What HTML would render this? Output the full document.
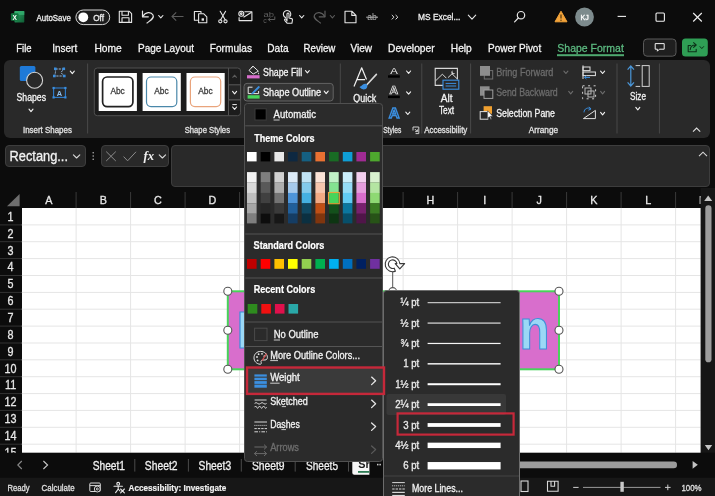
<!DOCTYPE html>
<html><head><meta charset="utf-8"><title>Excel</title>
<style>
*{box-sizing:border-box;margin:0;padding:0}
html,body{width:715px;height:496px;overflow:hidden;background:#0c0c0c}
body{position:relative;font-family:"Liberation Sans",sans-serif;color:#fff}
.a{position:absolute}
svg.L{position:absolute;left:0;top:0;overflow:hidden;will-change:transform}
</style></head><body>
<div class="a" style="left:4px;top:59.5px;width:706px;height:78.5px;background:#292929;border-radius:6px"></div>
<div class="a" style="left:5px;top:144.5px;width:80.5px;height:22.5px;background:#292929;border:1px solid #3d3d3d;border-radius:4px"></div>
<div class="a" style="left:100.5px;top:144.5px;width:68px;height:22.5px;background:#292929;border:1px solid #3d3d3d;border-radius:4px"></div>
<div class="a" style="left:171px;top:144.5px;width:539px;height:42px;background:#292929;border:1px solid #3d3d3d;border-radius:4px"></div>
<div class="a" style="left:21.6px;top:208.0px;width:679.0px;height:244.7px;background:#fff"></div>
<div class="a" style="left:0;top:477.3px;width:715px;height:19px;background:#171717"></div>
<svg class="L" width="715" height="496" viewBox="0 0 715 496" font-family="Liberation Sans, sans-serif" >
<line x1="76.1" y1="208" x2="76.1" y2="452.7" stroke="#e5e5e5" stroke-width="1"/>
<line x1="76.1" y1="192" x2="76.1" y2="208" stroke="#3a3a3a" stroke-width="1"/>
<line x1="130.6" y1="208" x2="130.6" y2="452.7" stroke="#e5e5e5" stroke-width="1"/>
<line x1="130.6" y1="192" x2="130.6" y2="208" stroke="#3a3a3a" stroke-width="1"/>
<line x1="185.1" y1="208" x2="185.1" y2="452.7" stroke="#e5e5e5" stroke-width="1"/>
<line x1="185.1" y1="192" x2="185.1" y2="208" stroke="#3a3a3a" stroke-width="1"/>
<line x1="239.6" y1="208" x2="239.6" y2="452.7" stroke="#e5e5e5" stroke-width="1"/>
<line x1="239.6" y1="192" x2="239.6" y2="208" stroke="#3a3a3a" stroke-width="1"/>
<line x1="294.1" y1="208" x2="294.1" y2="452.7" stroke="#e5e5e5" stroke-width="1"/>
<line x1="294.1" y1="192" x2="294.1" y2="208" stroke="#3a3a3a" stroke-width="1"/>
<line x1="348.6" y1="208" x2="348.6" y2="452.7" stroke="#e5e5e5" stroke-width="1"/>
<line x1="348.6" y1="192" x2="348.6" y2="208" stroke="#3a3a3a" stroke-width="1"/>
<line x1="403.1" y1="208" x2="403.1" y2="452.7" stroke="#e5e5e5" stroke-width="1"/>
<line x1="403.1" y1="192" x2="403.1" y2="208" stroke="#3a3a3a" stroke-width="1"/>
<line x1="457.6" y1="208" x2="457.6" y2="452.7" stroke="#e5e5e5" stroke-width="1"/>
<line x1="457.6" y1="192" x2="457.6" y2="208" stroke="#3a3a3a" stroke-width="1"/>
<line x1="512.1" y1="208" x2="512.1" y2="452.7" stroke="#e5e5e5" stroke-width="1"/>
<line x1="512.1" y1="192" x2="512.1" y2="208" stroke="#3a3a3a" stroke-width="1"/>
<line x1="566.6" y1="208" x2="566.6" y2="452.7" stroke="#e5e5e5" stroke-width="1"/>
<line x1="566.6" y1="192" x2="566.6" y2="208" stroke="#3a3a3a" stroke-width="1"/>
<line x1="621.1" y1="208" x2="621.1" y2="452.7" stroke="#e5e5e5" stroke-width="1"/>
<line x1="621.1" y1="192" x2="621.1" y2="208" stroke="#3a3a3a" stroke-width="1"/>
<line x1="675.6" y1="208" x2="675.6" y2="452.7" stroke="#e5e5e5" stroke-width="1"/>
<line x1="675.6" y1="192" x2="675.6" y2="208" stroke="#3a3a3a" stroke-width="1"/>
<line x1="21.6" y1="224.9" x2="700.6" y2="224.9" stroke="#e5e5e5" stroke-width="1"/>
<line x1="0" y1="224.9" x2="21.6" y2="224.9" stroke="#333" stroke-width="1"/>
<line x1="21.6" y1="241.7" x2="700.6" y2="241.7" stroke="#e5e5e5" stroke-width="1"/>
<line x1="0" y1="241.7" x2="21.6" y2="241.7" stroke="#333" stroke-width="1"/>
<line x1="21.6" y1="258.6" x2="700.6" y2="258.6" stroke="#e5e5e5" stroke-width="1"/>
<line x1="0" y1="258.6" x2="21.6" y2="258.6" stroke="#333" stroke-width="1"/>
<line x1="21.6" y1="275.5" x2="700.6" y2="275.5" stroke="#e5e5e5" stroke-width="1"/>
<line x1="0" y1="275.5" x2="21.6" y2="275.5" stroke="#333" stroke-width="1"/>
<line x1="21.6" y1="292.4" x2="700.6" y2="292.4" stroke="#e5e5e5" stroke-width="1"/>
<line x1="0" y1="292.4" x2="21.6" y2="292.4" stroke="#333" stroke-width="1"/>
<line x1="21.6" y1="309.2" x2="700.6" y2="309.2" stroke="#e5e5e5" stroke-width="1"/>
<line x1="0" y1="309.2" x2="21.6" y2="309.2" stroke="#333" stroke-width="1"/>
<line x1="21.6" y1="326.1" x2="700.6" y2="326.1" stroke="#e5e5e5" stroke-width="1"/>
<line x1="0" y1="326.1" x2="21.6" y2="326.1" stroke="#333" stroke-width="1"/>
<line x1="21.6" y1="343.0" x2="700.6" y2="343.0" stroke="#e5e5e5" stroke-width="1"/>
<line x1="0" y1="343.0" x2="21.6" y2="343.0" stroke="#333" stroke-width="1"/>
<line x1="21.6" y1="359.8" x2="700.6" y2="359.8" stroke="#e5e5e5" stroke-width="1"/>
<line x1="0" y1="359.8" x2="21.6" y2="359.8" stroke="#333" stroke-width="1"/>
<line x1="21.6" y1="376.7" x2="700.6" y2="376.7" stroke="#e5e5e5" stroke-width="1"/>
<line x1="0" y1="376.7" x2="21.6" y2="376.7" stroke="#333" stroke-width="1"/>
<line x1="21.6" y1="393.6" x2="700.6" y2="393.6" stroke="#e5e5e5" stroke-width="1"/>
<line x1="0" y1="393.6" x2="21.6" y2="393.6" stroke="#333" stroke-width="1"/>
<line x1="21.6" y1="410.4" x2="700.6" y2="410.4" stroke="#e5e5e5" stroke-width="1"/>
<line x1="0" y1="410.4" x2="21.6" y2="410.4" stroke="#333" stroke-width="1"/>
<line x1="21.6" y1="427.3" x2="700.6" y2="427.3" stroke="#e5e5e5" stroke-width="1"/>
<line x1="0" y1="427.3" x2="21.6" y2="427.3" stroke="#333" stroke-width="1"/>
<line x1="21.6" y1="444.2" x2="700.6" y2="444.2" stroke="#e5e5e5" stroke-width="1"/>
<line x1="0" y1="444.2" x2="21.6" y2="444.2" stroke="#333" stroke-width="1"/>
<text x="45.2" y="204.3" font-size="11.50" stroke="#e8e8e8" stroke-width="0.3" fill="#e8e8e8" textLength="7.2" lengthAdjust="spacingAndGlyphs">A</text>
<text x="99.7" y="204.3" font-size="11.50" stroke="#e8e8e8" stroke-width="0.3" fill="#e8e8e8" textLength="7.2" lengthAdjust="spacingAndGlyphs">B</text>
<text x="153.9" y="204.3" font-size="11.50" stroke="#e8e8e8" stroke-width="0.3" fill="#e8e8e8" textLength="7.8" lengthAdjust="spacingAndGlyphs">C</text>
<text x="208.4" y="204.3" font-size="11.50" stroke="#e8e8e8" stroke-width="0.3" fill="#e8e8e8" textLength="7.8" lengthAdjust="spacingAndGlyphs">D</text>
<text x="263.2" y="204.3" font-size="11.50" stroke="#e8e8e8" stroke-width="0.3" fill="#e8e8e8" textLength="7.2" lengthAdjust="spacingAndGlyphs">E</text>
<text x="318.0" y="204.3" font-size="11.50" stroke="#e8e8e8" stroke-width="0.3" fill="#e8e8e8" textLength="6.6" lengthAdjust="spacingAndGlyphs">F</text>
<text x="371.6" y="204.3" font-size="11.50" stroke="#e8e8e8" stroke-width="0.3" fill="#e8e8e8" textLength="8.4" lengthAdjust="spacingAndGlyphs">G</text>
<text x="426.4" y="204.3" font-size="11.50" stroke="#e8e8e8" stroke-width="0.3" fill="#e8e8e8" textLength="7.8" lengthAdjust="spacingAndGlyphs">H</text>
<text x="483.3" y="204.3" font-size="11.50" stroke="#e8e8e8" stroke-width="0.3" fill="#e8e8e8" textLength="3.0" lengthAdjust="spacingAndGlyphs">I</text>
<text x="536.6" y="204.3" font-size="11.50" stroke="#e8e8e8" stroke-width="0.3" fill="#e8e8e8" textLength="5.4" lengthAdjust="spacingAndGlyphs">J</text>
<text x="590.2" y="204.3" font-size="11.50" stroke="#e8e8e8" stroke-width="0.3" fill="#e8e8e8" textLength="7.2" lengthAdjust="spacingAndGlyphs">K</text>
<text x="645.3" y="204.3" font-size="11.50" stroke="#e8e8e8" stroke-width="0.3" fill="#e8e8e8" textLength="6.0" lengthAdjust="spacingAndGlyphs">L</text>
<text x="698.8" y="204.3" font-size="11.5" fill="#e8e8e8">M</text>
<rect x="700.6" y="188" width="15" height="268" fill="#161616"/>
<text x="7.6" y="220.7" font-size="12.00" stroke="#e8e8e8" stroke-width="0.3" fill="#e8e8e8" textLength="6.0" lengthAdjust="spacingAndGlyphs">1</text>
<text x="7.6" y="237.6" font-size="12.00" stroke="#e8e8e8" stroke-width="0.3" fill="#e8e8e8" textLength="6.0" lengthAdjust="spacingAndGlyphs">2</text>
<text x="7.6" y="254.5" font-size="12.00" stroke="#e8e8e8" stroke-width="0.3" fill="#e8e8e8" textLength="6.0" lengthAdjust="spacingAndGlyphs">3</text>
<text x="7.6" y="271.3" font-size="12.00" stroke="#e8e8e8" stroke-width="0.3" fill="#e8e8e8" textLength="6.0" lengthAdjust="spacingAndGlyphs">4</text>
<text x="7.6" y="288.2" font-size="12.00" stroke="#e8e8e8" stroke-width="0.3" fill="#e8e8e8" textLength="6.0" lengthAdjust="spacingAndGlyphs">5</text>
<text x="7.6" y="305.1" font-size="12.00" stroke="#e8e8e8" stroke-width="0.3" fill="#e8e8e8" textLength="6.0" lengthAdjust="spacingAndGlyphs">6</text>
<text x="7.6" y="322.0" font-size="12.00" stroke="#e8e8e8" stroke-width="0.3" fill="#e8e8e8" textLength="6.0" lengthAdjust="spacingAndGlyphs">7</text>
<text x="7.6" y="338.8" font-size="12.00" stroke="#e8e8e8" stroke-width="0.3" fill="#e8e8e8" textLength="6.0" lengthAdjust="spacingAndGlyphs">8</text>
<text x="7.6" y="355.7" font-size="12.00" stroke="#e8e8e8" stroke-width="0.3" fill="#e8e8e8" textLength="6.0" lengthAdjust="spacingAndGlyphs">9</text>
<text x="4.6" y="372.6" font-size="12.00" stroke="#e8e8e8" stroke-width="0.3" fill="#e8e8e8" textLength="12.0" lengthAdjust="spacingAndGlyphs">10</text>
<text x="5.0" y="389.4" font-size="12.00" stroke="#e8e8e8" stroke-width="0.3" fill="#e8e8e8" textLength="11.2" lengthAdjust="spacingAndGlyphs">11</text>
<text x="4.6" y="406.3" font-size="12.00" stroke="#e8e8e8" stroke-width="0.3" fill="#e8e8e8" textLength="12.0" lengthAdjust="spacingAndGlyphs">12</text>
<text x="4.6" y="423.2" font-size="12.00" stroke="#e8e8e8" stroke-width="0.3" fill="#e8e8e8" textLength="12.0" lengthAdjust="spacingAndGlyphs">13</text>
<text x="4.6" y="440.0" font-size="12.00" stroke="#e8e8e8" stroke-width="0.3" fill="#e8e8e8" textLength="12.0" lengthAdjust="spacingAndGlyphs">14</text>
<text x="4.6" y="456.9" font-size="12.00" stroke="#e8e8e8" stroke-width="0.3" fill="#e8e8e8" textLength="12.0" lengthAdjust="spacingAndGlyphs">15</text>
<path d="M7 206.3 L19.6 206.3 L19.6 194 Z" fill="#6e6e6e"/>
<path d="M704.2 201 L708.2 195.6 L712.2 201 Z" fill="#c4c4c4"/>
<rect x="705.3" y="205.3" width="6.2" height="157" rx="3.1" fill="#9c9c9c"/>
<path d="M704.8 445 L712.2 445 L708.5 450.2 Z" fill="#c4c4c4"/>
<rect x="0" y="452.7" width="715" height="25" fill="#0c0c0c"/>
<path d="M21.8 461 L17.8 465 L21.8 469" fill="none" stroke="#8a8a8a" stroke-width="1.1"/>
<path d="M43.4 461 L47.6 465 L43.4 469" fill="none" stroke="#c8c8c8" stroke-width="1.1"/>
<text x="92.7" y="470.4" font-size="12.00" stroke="#f0f0f0" stroke-width="0.3" fill="#f0f0f0" textLength="32.3" lengthAdjust="spacingAndGlyphs">Sheet1</text>
<text x="144.8" y="470.4" font-size="12.00" stroke="#f0f0f0" stroke-width="0.3" fill="#f0f0f0" textLength="32.7" lengthAdjust="spacingAndGlyphs">Sheet2</text>
<text x="198.5" y="470.4" font-size="12.00" stroke="#f0f0f0" stroke-width="0.3" fill="#f0f0f0" textLength="32.7" lengthAdjust="spacingAndGlyphs">Sheet3</text>
<text x="251.9" y="470.4" font-size="12.00" stroke="#f0f0f0" stroke-width="0.3" fill="#f0f0f0" textLength="32.7" lengthAdjust="spacingAndGlyphs">Sheet9</text>
<text x="306.0" y="470.4" font-size="12.00" stroke="#f0f0f0" stroke-width="0.3" fill="#f0f0f0" textLength="32.0" lengthAdjust="spacingAndGlyphs">Sheet5</text>
<line x1="134.8" y1="459" x2="134.8" y2="471.6" stroke="#4a4a4a" stroke-width="1"/>
<line x1="188.4" y1="459" x2="188.4" y2="471.6" stroke="#4a4a4a" stroke-width="1"/>
<line x1="241.3" y1="459" x2="241.3" y2="471.6" stroke="#4a4a4a" stroke-width="1"/>
<line x1="295.2" y1="459" x2="295.2" y2="471.6" stroke="#4a4a4a" stroke-width="1"/>
<line x1="348.5" y1="459" x2="348.5" y2="471.6" stroke="#4a4a4a" stroke-width="1"/>
<path d="M352.3 456 H369.4 V474.7 H354.3 Q352.3 474.7 352.3 472.7 Z" fill="#f7f7f7"/>
<clipPath id="tabclip"><rect x="352.3" y="456" width="17.1" height="18.7"/></clipPath>
<text x="358.2" y="467.6" font-size="10.8" font-weight="bold" fill="#1c1c1c" clip-path="url(#tabclip)">Sheet8</text>
<rect x="358" y="471" width="11.4" height="1.8" fill="#2f7d55"/>
<rect x="377" y="463.8" width="1.5" height="1.6" fill="#c8c8c8"/><rect x="379.4" y="463.8" width="1.5" height="1.6" fill="#c8c8c8"/>
<rect x="500" y="461.6" width="177" height="6.6" rx="3.3" fill="#9c9c9c"/>
<path d="M692.6 461 L697.8 464.8 L692.6 468.7 Z" fill="#c4c4c4"/>
<text x="7.6" y="490.5" font-size="9.20" stroke="#e0e0e0" stroke-width="0.3" fill="#e0e0e0" textLength="22.1" lengthAdjust="spacingAndGlyphs">Ready</text>
<text x="41.6" y="490.5" font-size="9.20" stroke="#e0e0e0" stroke-width="0.3" fill="#e0e0e0" textLength="33.0" lengthAdjust="spacingAndGlyphs">Calculate</text>
<text x="128.5" y="490.5" font-size="9.60" font-weight="bold" stroke="#f0f0f0" stroke-width="0.2" fill="#f0f0f0" textLength="97.7" lengthAdjust="spacingAndGlyphs">Accessibility: Investigate</text>
<text x="681.4" y="490.8" font-size="9.20" stroke="#e0e0e0" stroke-width="0.3" fill="#e0e0e0" textLength="20.1" lengthAdjust="spacingAndGlyphs">100%</text>
<g fill="none" stroke="#d8d8d8" stroke-width="1"><rect x="89.8" y="483" width="10.5" height="8.5" rx="1"/><line x1="89.8" y1="485.6" x2="100.3" y2="485.6"/><circle cx="97.3" cy="489" r="3" fill="#141414"/><circle cx="97.3" cy="489" r="1"/></g>
<g fill="none" stroke="#e8e8e8" stroke-width="1.1" stroke-linecap="round"><circle cx="118.2" cy="483.8" r="1.4"/><path d="M114 486.2 L122.4 486.2 M118.2 486.2 L118.2 489 L115.6 492.6 M118.2 489 L120 491"/><path d="M120.6 489 L124.4 492.8 M124.4 489 L120.6 492.8"/></g>
<g fill="none" stroke="#d8d8d8" stroke-width="1.1"><rect x="521" y="481" width="7" height="10.5"/><path d="M547.5 481.3 h10.6 v10 h-10.6 Z M551 481.3 v5 h3.6 v-5"/></g>
<line x1="573.2" y1="487.4" x2="578.6" y2="487.4" stroke="#d0d0d0" stroke-width="1"/>
<line x1="583" y1="487.4" x2="660.5" y2="487.4" stroke="#9a9a9a" stroke-width="1"/>
<rect x="620.4" y="481.8" width="3.4" height="10" fill="#c8c8c8"/>
<path d="M665 487.4 h5.6 M667.8 484.6 v5.6" stroke="#d0d0d0" stroke-width="1" fill="none"/>
</svg>
<svg class="L" width="715" height="496" viewBox="0 0 715 496" font-family="Liberation Sans, sans-serif" >
<defs><linearGradient id="xg" x1="0" y1="0" x2="1" y2="1"><stop offset="0" stop-color="#2fa866"/><stop offset="1" stop-color="#0e5c34"/></linearGradient></defs>
<rect x="14.5" y="11" width="9.8" height="11.6" rx="1.2" fill="url(#xg)"/>
<rect x="14.5" y="11" width="9.8" height="3.9" fill="#35b070" opacity=".8"/>
<rect x="10.9" y="13.3" width="7.6" height="7.4" rx="1" fill="#12773f"/>
<text x="12.4" y="19.6" font-size="6.6" font-weight="bold" fill="#fff">X</text>
<text x="36.6" y="20.5" font-size="9.20" stroke="#f0f0f0" stroke-width="0.3" fill="#f0f0f0" textLength="34.2" lengthAdjust="spacingAndGlyphs">AutoSave</text>
<rect x="75.9" y="10" width="33.8" height="14.6" rx="7.3" fill="#1c1c1c" stroke="#d8d8d8" stroke-width="1"/>
<circle cx="83.3" cy="17.3" r="4.9" fill="#fff"/>
<text x="93.2" y="20.5" font-size="9.20" stroke="#f0f0f0" stroke-width="0.3" fill="#f0f0f0" textLength="10.8" lengthAdjust="spacingAndGlyphs">Off</text>
<g fill="none" stroke="#e6e6e6" stroke-width="1.1" stroke-linejoin="round"><path d="M119.3 11.3 h10 l2.3 2.3 v8.8 h-12.3 Z"/><path d="M122 11.3 v4 h6.4 v-4"/><path d="M122 22.4 v-4.6 h7 v4.6"/></g>
<g fill="none" stroke="#e6e6e6" stroke-width="1.2" stroke-linecap="round" stroke-linejoin="round"><path d="M142.5 11 v5.8 h5.8"/><path d="M142.8 16.5 C145.5 11.8 151 11.5 153 15 C154.6 18 151 20 147 23"/></g>
<path d="M158.7 15.5 L160.8 17.9 L162.9 15.5" fill="none" stroke="#e6e6e6" stroke-width="1.1" stroke-linecap="round" stroke-linejoin="round"/>
<path d="M183.5 16.5 H172 M176.2 12.3 L172 16.5 L176.2 20.7" fill="none" stroke="#5c5c5c" stroke-width="1.1"/>
<g fill="none" stroke="#e6e6e6" stroke-width="1.1" stroke-linejoin="round"><path d="M198.6 20.3 h-4.2 v-8.8 h6.6 v2"/><path d="M198.6 13.8 h5.2 l3 3 v6 h-8.2 Z"/><rect x="201.6" y="18.3" width="2.4" height="2.4" fill="#e6e6e6" stroke="none"/></g>
<g fill="none" stroke="#e6e6e6" stroke-width="1.1" stroke-linecap="round"><path d="M220.2 11.3 L225.3 20 M225.6 11.3 L220.5 20"/><circle cx="220.3" cy="21.3" r="1.6"/><circle cx="225.5" cy="21.3" r="1.6"/></g>
<g fill="none" stroke="#e6e6e6" stroke-width="1.1" stroke-linejoin="round"><path d="M244.5 11.8 h7.4 v8.8 h-12.8 v-3.4"/><path d="M243.5 17.3 L251.6 12.2"/><circle cx="241.3" cy="13.7" r="2.5"/><circle cx="241.3" cy="13.7" r=".8"/></g>
<text x="263.6" y="17" font-size="7" fill="#5e5e5e" textLength="10.5" lengthAdjust="spacingAndGlyphs">ab</text>
<text x="263.2" y="23" font-size="7" fill="#5e5e5e">c</text>
<path d="M274.8 16.5 v3 h-6.5 M270.3 17.5 l-2 2 l2 2" fill="none" stroke="#5e5e5e" stroke-width="1"/>
<g fill="none" stroke="#e6e6e6" stroke-width="1.1" stroke-linecap="round" stroke-linejoin="round"><path d="M285.6 17.6 A3.7 3.7 0 1 1 290.2 16.2"/><path d="M287 21 v-7 a1 1 0 0 1 2 0 v4 l2.6 .6 a1.2 1.2 0 0 1 .9 1.4 l-.6 3.3 h-4.6 l-2.6 -3 a.9.9 0 0 1 1.3 -1.2 Z"/></g>
<path d="M299.6 15.5 L301.7 17.9 L303.8 15.5" fill="none" stroke="#e6e6e6" stroke-width="1.1" stroke-linecap="round" stroke-linejoin="round"/>
<g fill="none" stroke="#5c5c5c" stroke-width="1.2" stroke-linecap="round" stroke-linejoin="round"><path d="M325 11 v5.8 h-5.8"/><path d="M324.7 16.5 C322 11.8 316.5 11.5 314.5 15 C312.9 18 316.5 20 320.5 23"/></g>
<path d="M330.3 15.5 L332.4 17.9 L334.5 15.5" fill="none" stroke="#5c5c5c" stroke-width="1.1" stroke-linecap="round" stroke-linejoin="round"/>
<path d="M345 11.2 h6.8 l4.2 4.2 v7.3 h-11 Z M351.8 11.2 v4.2 h4.2" fill="none" stroke="#e6e6e6" stroke-width="1.1" stroke-linejoin="round"/>
<text x="367.2" y="20.2" font-size="9.5" fill="#b4b4b4" textLength="9.6" lengthAdjust="spacingAndGlyphs">ab</text>
<line x1="366.2" y1="17.2" x2="378" y2="17.2" stroke="#b4b4b4" stroke-width="1"/>
<path d="M391.8 15 l2.2 2.2 l-2.2 2.2 M395.6 15 l2.2 2.2 l-2.2 2.2" fill="none" stroke="#e6e6e6" stroke-width="1"/>
<text x="418.0" y="20.3" font-size="9.60" stroke="#f0f0f0" stroke-width="0.3" fill="#f0f0f0" textLength="42.4" lengthAdjust="spacingAndGlyphs">MS Excel...</text>
<path d="M468.3 15.2 L472.0 19.2 L475.7 15.2" fill="none" stroke="#e6e6e6" stroke-width="1.1" stroke-linecap="round" stroke-linejoin="round"/>
<g fill="none" stroke="#e6e6e6" stroke-width="1.2" stroke-linecap="round"><circle cx="521" cy="15.2" r="3.7"/><path d="M518.3 18 L514.6 21.8"/></g>
<path d="M561 11.2 L567 21.8 H555 Z" fill="#f2a33a" stroke="#f2a33a" stroke-width="1" stroke-linejoin="round"/><path d="M561 14.5 v4" stroke="#4a3510" stroke-width="1.2"/><circle cx="561" cy="20.2" r=".7" fill="#4a3510"/>
<circle cx="584.5" cy="17" r="9.4" fill="#7d8b8d"/>
<text x="580.5" y="19.6" font-size="7.00" stroke="#fff" stroke-width="0.3" fill="#fff" textLength="8.2" lengthAdjust="spacingAndGlyphs">KJ</text>
<line x1="617.6" y1="16.4" x2="626" y2="16.4" stroke="#f0f0f0" stroke-width="1.1"/>
<rect x="656" y="13" width="8.4" height="8.2" rx="1" fill="none" stroke="#f0f0f0" stroke-width="1.1"/>
<path d="M693.2 13 L701.8 21.5 M701.8 13 L693.2 21.5" stroke="#f0f0f0" stroke-width="1.1"/>
<text x="16.3" y="52.0" font-size="11.20" stroke="#f4f4f4" stroke-width="0.3" fill="#f4f4f4" textLength="15.3" lengthAdjust="spacingAndGlyphs">File</text>
<text x="52.3" y="52.0" font-size="11.20" stroke="#f4f4f4" stroke-width="0.3" fill="#f4f4f4" textLength="24.9" lengthAdjust="spacingAndGlyphs">Insert</text>
<text x="94.4" y="52.0" font-size="11.20" stroke="#f4f4f4" stroke-width="0.3" fill="#f4f4f4" textLength="27.4" lengthAdjust="spacingAndGlyphs">Home</text>
<text x="138.0" y="52.0" font-size="11.20" stroke="#f4f4f4" stroke-width="0.3" fill="#f4f4f4" textLength="56.0" lengthAdjust="spacingAndGlyphs">Page Layout</text>
<text x="209.8" y="52.0" font-size="11.20" stroke="#f4f4f4" stroke-width="0.3" fill="#f4f4f4" textLength="42.2" lengthAdjust="spacingAndGlyphs">Formulas</text>
<text x="267.3" y="52.0" font-size="11.20" stroke="#f4f4f4" stroke-width="0.3" fill="#f4f4f4" textLength="21.3" lengthAdjust="spacingAndGlyphs">Data</text>
<text x="303.5" y="52.0" font-size="11.20" stroke="#f4f4f4" stroke-width="0.3" fill="#f4f4f4" textLength="31.8" lengthAdjust="spacingAndGlyphs">Review</text>
<text x="350.4" y="52.0" font-size="11.20" stroke="#f4f4f4" stroke-width="0.3" fill="#f4f4f4" textLength="21.6" lengthAdjust="spacingAndGlyphs">View</text>
<text x="388.0" y="52.0" font-size="11.20" stroke="#f4f4f4" stroke-width="0.3" fill="#f4f4f4" textLength="46.6" lengthAdjust="spacingAndGlyphs">Developer</text>
<text x="450.8" y="52.0" font-size="11.20" stroke="#f4f4f4" stroke-width="0.3" fill="#f4f4f4" textLength="21.0" lengthAdjust="spacingAndGlyphs">Help</text>
<text x="488.0" y="52.0" font-size="11.20" stroke="#f4f4f4" stroke-width="0.3" fill="#f4f4f4" textLength="53.2" lengthAdjust="spacingAndGlyphs">Power Pivot</text>
<text x="557.3" y="52.0" font-size="11.20" stroke="#5cba80" stroke-width="0.3" fill="#5cba80" textLength="66.5" lengthAdjust="spacingAndGlyphs">Shape Format</text>
<rect x="557" y="54.2" width="67" height="2" fill="#4faa70"/>
<rect x="643.5" y="39" width="32.5" height="17.2" rx="3.5" fill="#1f1f1f" stroke="#5a5a5a" stroke-width="1"/>
<path d="M655.2 43.6 h9 v5.6 h-4.8 l-2 2 v-2 h-2.2 Z" fill="none" stroke="#f0f0f0" stroke-width="1" stroke-linejoin="round"/>
<rect x="682" y="38.6" width="25.8" height="17.8" rx="3.5" fill="#2f9e55"/>
<g fill="none" stroke="#0c3018" stroke-width="1.1" stroke-linejoin="round" stroke-linecap="round"><path d="M690.5 45.5 h-2.3 v6.3 h8 v-2.4"/><path d="M690.2 49.6 c.4 -3 2.2 -4.6 5 -4.6 M693.6 42.6 l2.6 2.4 l-2.6 2.4"/></g>
<path d="M700.0 46.6 L701.8 48.6 L703.6 46.6" fill="none" stroke="#0c3018" stroke-width="1" stroke-linecap="round" stroke-linejoin="round"/>
</svg>
<svg class="L" width="715" height="496" viewBox="0 0 715 496" font-family="Liberation Sans, sans-serif" >
<line x1="87.6" y1="63.5" x2="87.6" y2="133.5" stroke="#484848" stroke-width="1"/>
<line x1="340.3" y1="63.5" x2="340.3" y2="133.5" stroke="#484848" stroke-width="1"/>
<line x1="421.8" y1="63.5" x2="421.8" y2="133.5" stroke="#484848" stroke-width="1"/>
<line x1="470.6" y1="63.5" x2="470.6" y2="133.5" stroke="#484848" stroke-width="1"/>
<line x1="617" y1="63.5" x2="617" y2="133.5" stroke="#484848" stroke-width="1"/>
<line x1="659.4" y1="63.5" x2="659.4" y2="133.5" stroke="#484848" stroke-width="1"/>
<rect x="19.8" y="66" width="15.6" height="15" rx="1.5" fill="#1f7ad8"/>
<circle cx="34.6" cy="80.3" r="8" fill="#292929" stroke="#d4d4d4" stroke-width="1.1"/>
<text x="16.5" y="101.3" font-size="10.00" stroke="#f2f2f2" stroke-width="0.3" fill="#f2f2f2" textLength="29.5" lengthAdjust="spacingAndGlyphs">Shapes</text>
<path d="M29.0 109.2 L31.0 111.6 L33.0 109.2" fill="none" stroke="#f2f2f2" stroke-width="1.1" stroke-linecap="round" stroke-linejoin="round"/>
<path d="M55.5 69 H63.5 L61 72.6 L64 76 H54.5 Q55.8 72.5 55.5 69 Z" fill="none" stroke="#9ab8d8" stroke-width="1" stroke-dasharray="2.2 1"/>
<rect x="54.0" y="67.5" width="2.6" height="2.6" fill="#3b8fe0"/>
<rect x="62.5" y="67.5" width="2.6" height="2.6" fill="#3b8fe0"/>
<rect x="53.0" y="74.7" width="2.6" height="2.6" fill="#3b8fe0"/>
<rect x="63.0" y="74.7" width="2.6" height="2.6" fill="#3b8fe0"/>
<path d="M70.3 71.2 L72.3 73.6 L74.3 71.2" fill="none" stroke="#f2f2f2" stroke-width="1.1" stroke-linecap="round" stroke-linejoin="round"/>
<rect x="53.6" y="88" width="11.8" height="9.4" fill="none" stroke="#2f7fd0" stroke-width="1.1"/>
<rect x="52.5" y="86.9" width="2.2" height="2.2" fill="#3b8fe0"/>
<rect x="64.30000000000001" y="86.9" width="2.2" height="2.2" fill="#3b8fe0"/>
<rect x="52.5" y="96.30000000000001" width="2.2" height="2.2" fill="#3b8fe0"/>
<rect x="64.30000000000001" y="96.30000000000001" width="2.2" height="2.2" fill="#3b8fe0"/>
<text x="56.8" y="95.7" font-size="7.4" fill="#8ec0f0" font-weight="bold">A</text>
<text x="23.0" y="133.2" font-size="9.00" stroke="#e4e4e4" stroke-width="0.3" fill="#e4e4e4" textLength="48.9" lengthAdjust="spacingAndGlyphs">Insert Shapes</text>
<rect x="94.3" y="68" width="146.3" height="47.7" rx="3" fill="#1c1c1c" stroke="#505050" stroke-width="1"/>
<rect x="98.7" y="73" width="38.2" height="38" fill="#fff"/>
<rect x="102.6" y="77" width="30.3" height="29.6" rx="4.5" fill="none" stroke="#222" stroke-width="1.7"/>
<text x="110.4" y="93.9" font-size="9.20" stroke="#3c3c3c" stroke-width="0.3" fill="#3c3c3c" textLength="14.4" lengthAdjust="spacingAndGlyphs">Abc</text>
<rect x="142.6" y="73" width="38.2" height="38" fill="#fff"/>
<rect x="146.5" y="77" width="30.3" height="29.6" rx="4.5" fill="none" stroke="#4a88aa" stroke-width="1.2"/>
<text x="154.3" y="93.9" font-size="9.20" stroke="#3c3c3c" stroke-width="0.3" fill="#3c3c3c" textLength="14.4" lengthAdjust="spacingAndGlyphs">Abc</text>
<rect x="186.5" y="73" width="38.2" height="38" fill="#fff"/>
<rect x="190.4" y="77" width="30.3" height="29.6" rx="4.5" fill="none" stroke="#e9a47c" stroke-width="1.2"/>
<text x="198.2" y="93.9" font-size="9.20" stroke="#3c3c3c" stroke-width="0.3" fill="#3c3c3c" textLength="14.4" lengthAdjust="spacingAndGlyphs">Abc</text>
<line x1="228.5" y1="68" x2="228.5" y2="115.7" stroke="#505050" stroke-width="1"/>
<rect x="228.5" y="84.8" width="12.1" height="15" fill="#262626" stroke="#5a5a5a" stroke-width="1"/>
<line x1="228.5" y1="99.8" x2="240.6" y2="99.8" stroke="#505050"/>
<path d="M232.5 77.6 L234.6 75.4 L236.7 77.6" fill="none" stroke="#5c5c5c" stroke-width="1.1"/>
<path d="M232.6 91.4 L234.6 93.8 L236.6 91.4" fill="none" stroke="#f2f2f2" stroke-width="1.1" stroke-linecap="round" stroke-linejoin="round"/>
<line x1="232.4" y1="104.6" x2="236.8" y2="104.6" stroke="#f0f0f0" stroke-width="1"/>
<path d="M232.6 107.0 L234.6 109.4 L236.6 107.0" fill="none" stroke="#f2f2f2" stroke-width="1.1" stroke-linecap="round" stroke-linejoin="round"/>
<text x="184.7" y="132.8" font-size="9.00" stroke="#e4e4e4" stroke-width="0.3" fill="#e4e4e4" textLength="45.3" lengthAdjust="spacingAndGlyphs">Shape Styles</text>
<path d="M253 66.2 L258.4 71.2 L253.2 74 L249 70.4 Z M253 66.2 L251 68" fill="none" stroke="#e8e8e8" stroke-width="1" stroke-linejoin="round"/>
<path d="M258.6 72.2 q1.2 1.8 0 2.4 q-1.2 -.6 0 -2.4 Z" fill="#e8e8e8"/>
<rect x="247" y="75.2" width="12.6" height="3.2" fill="#d86ecc"/>
<text x="263.0" y="75.9" font-size="10.00" stroke="#f2f2f2" stroke-width="0.3" fill="#f2f2f2" textLength="39.2" lengthAdjust="spacingAndGlyphs">Shape Fill</text>
<path d="M305.5 70.7 L307.4 72.9 L309.3 70.7" fill="none" stroke="#f2f2f2" stroke-width="1.1" stroke-linecap="round" stroke-linejoin="round"/>
<rect x="244" y="83.4" width="89.2" height="17.6" rx="3" fill="#343434" stroke="#646464" stroke-width="1"/>
<path d="M252.5 87.2 H248.2 V93.6 H258.6 V91" fill="none" stroke="#e8e8e8" stroke-width="1"/>
<path d="M258.6 86.2 L252.4 92.6 L251.6 94 L253.2 93.4 L259.6 87.2 Z" fill="#3b8fe0" stroke="#3b8fe0" stroke-width=".8" stroke-linejoin="round"/>
<rect x="247.6" y="95.2" width="12" height="3.4" fill="#47d45a"/>
<text x="263.0" y="96.0" font-size="10.00" stroke="#f2f2f2" stroke-width="0.3" fill="#f2f2f2" textLength="58.1" lengthAdjust="spacingAndGlyphs">Shape Outline</text>
<path d="M324.2 91.2 L326.2 93.6 L328.2 91.2" fill="none" stroke="#f2f2f2" stroke-width="1.1" stroke-linecap="round" stroke-linejoin="round"/>
<path d="M354 86.4 L361.7 67.8 L366.5 79.4 M357 79.6 H365" fill="none" stroke="#f0f0f0" stroke-width="1.2" stroke-linejoin="round"/>
<path d="M376.4 74.4 L366.6 85" fill="none" stroke="#d8d8d8" stroke-width="1.6" stroke-linecap="round"/>
<path d="M366.8 84 q-2.2 -1 -4.2 .8 q-1.2 1.6 -3.2 2.2 q2.8 3.6 6.4 2 q2.4 -1.6 1 -5 Z" fill="#3b8fe0"/>
<text x="353.3" y="101.5" font-size="10.00" stroke="#f2f2f2" stroke-width="0.3" fill="#f2f2f2" textLength="22.9" lengthAdjust="spacingAndGlyphs">Quick</text>
<text x="390.3" y="73.8" font-size="9.8" fill="#f0f0f0" textLength="7.6" lengthAdjust="spacingAndGlyphs">A</text>
<rect x="388" y="75.3" width="11.8" height="2.4" fill="#000"/>
<path d="M406.6 71.0 L408.6 73.4 L410.6 71.0" fill="none" stroke="#f2f2f2" stroke-width="1.1" stroke-linecap="round" stroke-linejoin="round"/>
<text x="389.6" y="94.3" font-size="11" font-weight="bold" fill="#292929" stroke="#f0f0f0" stroke-width=".7" textLength="8.6" lengthAdjust="spacingAndGlyphs">A</text>
<rect x="388" y="95.7" width="11.8" height="2.4" fill="#000"/>
<path d="M406.6 91.8 L408.6 94.2 L410.6 91.8" fill="none" stroke="#f2f2f2" stroke-width="1.1" stroke-linecap="round" stroke-linejoin="round"/>
<text x="388.8" y="117.6" font-size="14" font-weight="bold" fill="#292929" stroke="#3b8fe0" stroke-width="1.3" textLength="10.8" lengthAdjust="spacingAndGlyphs">A</text>
<path d="M405.8 112.1 L407.8 114.5 L409.8 112.1" fill="none" stroke="#f2f2f2" stroke-width="1.1" stroke-linecap="round" stroke-linejoin="round"/>
<text x="383.2" y="133.2" font-size="9.00" stroke="#e4e4e4" stroke-width="0.3" fill="#e4e4e4" textLength="18.1" lengthAdjust="spacingAndGlyphs">Styles</text>
<path d="M413 130.5 V127 H418.8 V133.6 H415.6" fill="none" stroke="#d0d0d0" stroke-width="1"/><path d="M414.8 129 L417.2 131.4 M417.4 129.4 V131.6 H415.2" fill="none" stroke="#d0d0d0" stroke-width="1"/>
<path d="M443 85.4 H435.2 V68.4 H457.4 V79.6" fill="none" stroke="#d8d8d8" stroke-width="1.1"/>
<path d="M435.4 81 L442.4 74.2 L446.4 78.2 M448 77.6 L452 73.8 L457.2 78.8" fill="none" stroke="#d8d8d8" stroke-width="1"/>
<path d="M452.8 70.4 a2 2 0 1 0 2.4 2.6 a1.8 1.8 0 0 1 -2.4 -2.6 Z" fill="#d8d8d8"/>
<rect x="443" y="80.2" width="15.8" height="9" fill="#292929" stroke="#3b8fe0" stroke-width="1.1"/>
<path d="M445.6 83.4 H456.2 M445.6 86 H456.2" stroke="#3b8fe0" stroke-width="1"/>
<text x="440.8" y="101.5" font-size="10.00" stroke="#f2f2f2" stroke-width="0.3" fill="#f2f2f2" textLength="11.8" lengthAdjust="spacingAndGlyphs">Alt</text>
<text x="438.9" y="113.8" font-size="10.00" stroke="#f2f2f2" stroke-width="0.3" fill="#f2f2f2" textLength="15.3" lengthAdjust="spacingAndGlyphs">Text</text>
<text x="424.2" y="133.2" font-size="9.00" stroke="#e4e4e4" stroke-width="0.3" fill="#e4e4e4" textLength="43.1" lengthAdjust="spacingAndGlyphs">Accessibility</text>
<rect x="484.3" y="70.6" width="8.4" height="8.4" fill="none" stroke="#707070" stroke-width="1"/>
<rect x="480" y="66" width="10" height="9.8" fill="#8c8c8c"/>
<text x="496.2" y="75.8" font-size="10.00" stroke="#6c6c6c" stroke-width="0.3" fill="#6c6c6c" textLength="57.1" lengthAdjust="spacingAndGlyphs">Bring Forward</text>
<path d="M563.9 71.1 L565.9 73.5 L567.9 71.1" fill="none" stroke="#6c6c6c" stroke-width="1.1" stroke-linecap="round" stroke-linejoin="round"/>
<rect x="480" y="86.3" width="9.6" height="9.4" fill="#8c8c8c"/>
<rect x="484" y="90" width="8.8" height="8.4" fill="#292929" stroke="#a0a0a0" stroke-width="1"/>
<text x="496.2" y="96.4" font-size="10.00" stroke="#6c6c6c" stroke-width="0.3" fill="#6c6c6c" textLength="61.5" lengthAdjust="spacingAndGlyphs">Send Backward</text>
<path d="M568.7 91.4 L570.7 93.8 L572.7 91.4" fill="none" stroke="#6c6c6c" stroke-width="1.1" stroke-linecap="round" stroke-linejoin="round"/>
<rect x="483.6" y="106.2" width="8.4" height="7.6" fill="#f0a030"/>
<rect x="480.2" y="111.6" width="7.6" height="7.6" fill="#292929" stroke="#e0e0e0" stroke-width="1"/>
<path d="M487.6 110.8 L487.6 118.4 L489.4 116.8 L490.8 119.6 L491.8 119 L490.4 116.4 L492.8 116.2 Z" fill="#fff" stroke="#292929" stroke-width=".6"/>
<text x="496.2" y="116.7" font-size="10.00" stroke="#f2f2f2" stroke-width="0.3" fill="#f2f2f2" textLength="58.8" lengthAdjust="spacingAndGlyphs">Selection Pane</text>
<g fill="none" stroke="#e0e0e0" stroke-width="1"><path d="M583 65.4 V79"/><rect x="583" y="67" width="7" height="3.6"/><rect x="583" y="72" width="12.4" height="3.6"/></g><path d="M590 77.4 H584.6 M586.4 75.8 L584.6 77.4 L586.4 79" fill="none" stroke="#3b8fe0" stroke-width="1"/>
<path d="M600.6 71.1 L602.6 73.5 L604.6 71.1" fill="none" stroke="#f2f2f2" stroke-width="1.1" stroke-linecap="round" stroke-linejoin="round"/>
<g fill="none" stroke="#b8b8b8" stroke-width="1"><rect x="585" y="88" width="6" height="6"/><rect x="588" y="91" width="6" height="6"/><rect x="582.6" y="85.8" width="13" height="13" stroke-dasharray="2 3.5" stroke="#d0d0d0"/></g>
<path d="M600.6 91.4 L602.6 93.8 L604.6 91.4" fill="none" stroke="#6c6c6c" stroke-width="1.1" stroke-linecap="round" stroke-linejoin="round"/>
<path d="M583.4 118.6 H595.4 V110.4 Z" fill="none" stroke="#e0e0e0" stroke-width="1"/><path d="M584 112.4 C584 108.6 588 107 590.6 108.8 M589 106.8 L591 109 L588.4 110.2" fill="none" stroke="#3b8fe0" stroke-width="1"/>
<path d="M600.6 112.4 L602.6 114.8 L604.6 112.4" fill="none" stroke="#f2f2f2" stroke-width="1.1" stroke-linecap="round" stroke-linejoin="round"/>
<text x="528.7" y="133.1" font-size="9.00" stroke="#e4e4e4" stroke-width="0.3" fill="#e4e4e4" textLength="29.4" lengthAdjust="spacingAndGlyphs">Arrange</text>
<path d="M630.8 66.5 V85.5 M627.6 69.6 L630.8 66 L634 69.6 M627.6 82.4 L630.8 86 L634 82.4" fill="none" stroke="#4a96d8" stroke-width="1.2"/>
<path d="M635.6 65.6 H640.2 M635.6 86.4 H640.2" stroke="#d0d0d0" stroke-width="1"/>
<rect x="642.2" y="65.6" width="7" height="20.8" fill="none" stroke="#d0d0d0" stroke-width="1"/>
<text x="630.0" y="100.4" font-size="10.00" stroke="#f2f2f2" stroke-width="0.3" fill="#f2f2f2" textLength="16.0" lengthAdjust="spacingAndGlyphs">Size</text>
<path d="M635.8 107.4 L637.8 109.8 L639.8 107.4" fill="none" stroke="#f2f2f2" stroke-width="1.1" stroke-linecap="round" stroke-linejoin="round"/>
<path d="M693 131.6 L696.6 128 L700.2 131.6" fill="none" stroke="#e0e0e0" stroke-width="1.1"/>
<text x="9.6" y="161.0" font-size="14.00" stroke="#f2f2f2" stroke-width="0.3" fill="#f2f2f2" textLength="58.4" lengthAdjust="spacingAndGlyphs">Rectang...</text>
<path d="M73.4 154.8 L76.6 158.0 L79.8 154.8" fill="none" stroke="#d8d8d8" stroke-width="1.1" stroke-linecap="round" stroke-linejoin="round"/>
<circle cx="93.2" cy="152.8" r=".8" fill="#b0b0b0"/>
<circle cx="93.2" cy="156" r=".8" fill="#b0b0b0"/>
<circle cx="93.2" cy="159.2" r=".8" fill="#b0b0b0"/>
<path d="M106.2 151.6 L115.8 161 M115.8 151.6 L106.2 161" stroke="#8c8c8c" stroke-width="1"/>
<path d="M123.6 156.6 L127.6 160.8 L136 151.8" fill="none" stroke="#8c8c8c" stroke-width="1"/>
<text x="143.6" y="160.4" font-size="13" font-style="italic" font-weight="bold" font-family="Liberation Serif, serif" fill="#f0f0f0" textLength="10.6" lengthAdjust="spacingAndGlyphs">fx</text>
<path d="M159.2 154.8 L162.4 158.0 L165.6 154.8" fill="none" stroke="#d8d8d8" stroke-width="1.1" stroke-linecap="round" stroke-linejoin="round"/>
<path d="M699 156.2 L703 152.2 L707 156.2" fill="none" stroke="#d8d8d8" stroke-width="1.1"/>
</svg>
<svg class="L" width="715" height="496" viewBox="0 0 715 496" font-family="Liberation Sans, sans-serif" >
<rect x="227.8" y="291.3" width="331.2" height="78" fill="#d86ecc" stroke="#47d45a" stroke-width="2"/>
<text x="236.6" y="348.4" font-size="52" font-weight="bold" fill="#9bd8f6" stroke="#3f8fd8" stroke-width="1.2">I</text>
<text x="519.6" y="349" font-size="58" font-weight="bold" fill="#9bd8f6" stroke="#3f8fd8" stroke-width="1.2" textLength="30" lengthAdjust="spacingAndGlyphs">n</text>
<line x1="392.7" y1="271.6" x2="392.7" y2="291" stroke="#555" stroke-width="1"/>
<path d="M404.6 263.6 L399.8 268.9 L395.2 263.6 L396.9 263.6 A4.3 4.3 0 1 0 394.2 268.2 L395.4 271.1 A7.4 7.4 0 1 1 399.9 263.6 Z" fill="#fff" stroke="#3a3a3a" stroke-width="1.15" stroke-linejoin="round"/>
<circle cx="227.8" cy="291.3" r="4" fill="#fff" stroke="#555" stroke-width="1.1"/>
<circle cx="227.8" cy="330.2" r="4" fill="#fff" stroke="#555" stroke-width="1.1"/>
<circle cx="227.8" cy="369.2" r="4" fill="#fff" stroke="#555" stroke-width="1.1"/>
<circle cx="559" cy="291.3" r="4" fill="#fff" stroke="#555" stroke-width="1.1"/>
<circle cx="559" cy="330.2" r="4" fill="#fff" stroke="#555" stroke-width="1.1"/>
<circle cx="559" cy="369.2" r="4" fill="#fff" stroke="#555" stroke-width="1.1"/>
<circle cx="392.7" cy="291.6" r="4" fill="#fff" stroke="#555" stroke-width="1.1"/>
<circle cx="392.7" cy="369.2" r="4" fill="#fff" stroke="#555" stroke-width="1.1"/>
</svg>
<div class="a" style="left:244.3px;top:102.5px;width:138.7px;height:359px;background:#2b2b2b;border:1px solid #505050;border-radius:3.5px"></div>
<div class="a" style="left:382.8px;top:290.2px;width:137px;height:216px;background:#2b2b2b;border:1px solid #6c6c6c;border-radius:3.5px"></div>
<svg class="L" width="715" height="496" viewBox="0 0 715 496" font-family="Liberation Sans, sans-serif" >
<rect x="255" y="108.8" width="11.2" height="11.2" fill="#000" stroke="#3c3c3c" stroke-width="1"/>
<text x="273.6" y="118.3" font-size="10.00" stroke="#f2f2f2" stroke-width="0.3" fill="#f2f2f2" textLength="42.4" lengthAdjust="spacingAndGlyphs">Automatic</text>
<line x1="273.6" y1="120" x2="279.6" y2="120" stroke="#f2f2f2" stroke-width=".8"/>
<line x1="245.3" y1="125.8" x2="382" y2="125.8" stroke="#555" stroke-width="1"/>
<line x1="245.3" y1="234" x2="382" y2="234" stroke="#555" stroke-width="1"/>
<line x1="245.3" y1="278" x2="382" y2="278" stroke="#555" stroke-width="1"/>
<line x1="245.3" y1="322" x2="382" y2="322" stroke="#555" stroke-width="1"/>
<line x1="245.3" y1="346.5" x2="382" y2="346.5" stroke="#555" stroke-width="1"/>
<text x="254.3" y="142.0" font-size="10.00" font-weight="bold" stroke="#fff" stroke-width="0.2" fill="#fff" textLength="60.2" lengthAdjust="spacingAndGlyphs">Theme Colors</text>
<text x="253.6" y="249.2" font-size="10.00" font-weight="bold" stroke="#fff" stroke-width="0.2" fill="#fff" textLength="70.8" lengthAdjust="spacingAndGlyphs">Standard Colors</text>
<text x="253.7" y="293.4" font-size="10.00" font-weight="bold" stroke="#fff" stroke-width="0.2" fill="#fff" textLength="61.5" lengthAdjust="spacingAndGlyphs">Recent Colors</text>
<rect x="247.0" y="152" width="9.6" height="9.4" fill="#ffffff"/>
<rect x="247.0" y="172.10" width="9.6" height="10.5" fill="#f2f2f2"/>
<rect x="247.0" y="182.50" width="9.6" height="10.5" fill="#d9d9d9"/>
<rect x="247.0" y="192.90" width="9.6" height="10.5" fill="#bfbfbf"/>
<rect x="247.0" y="203.30" width="9.6" height="10.5" fill="#a6a6a6"/>
<rect x="247.0" y="213.70" width="9.6" height="9.7" fill="#7f7f7f"/>
<rect x="260.7" y="152" width="9.6" height="9.4" fill="#000000"/>
<rect x="260.7" y="172.10" width="9.6" height="10.5" fill="#7f7f7f"/>
<rect x="260.7" y="182.50" width="9.6" height="10.5" fill="#595959"/>
<rect x="260.7" y="192.90" width="9.6" height="10.5" fill="#404040"/>
<rect x="260.7" y="203.30" width="9.6" height="10.5" fill="#262626"/>
<rect x="260.7" y="213.70" width="9.6" height="9.7" fill="#0d0d0d"/>
<rect x="274.4" y="152" width="9.6" height="9.4" fill="#e8e8e8"/>
<rect x="274.4" y="172.10" width="9.6" height="10.5" fill="#d1d1d1"/>
<rect x="274.4" y="182.50" width="9.6" height="10.5" fill="#aeaeae"/>
<rect x="274.4" y="192.90" width="9.6" height="10.5" fill="#747474"/>
<rect x="274.4" y="203.30" width="9.6" height="10.5" fill="#3a3a3a"/>
<rect x="274.4" y="213.70" width="9.6" height="9.7" fill="#171717"/>
<rect x="288.0" y="152" width="9.6" height="9.4" fill="#0e2841"/>
<rect x="288.0" y="172.10" width="9.6" height="10.5" fill="#dceaf7"/>
<rect x="288.0" y="182.50" width="9.6" height="10.5" fill="#a6caec"/>
<rect x="288.0" y="192.90" width="9.6" height="10.5" fill="#4e95d9"/>
<rect x="288.0" y="203.30" width="9.6" height="10.5" fill="#215f9a"/>
<rect x="288.0" y="213.70" width="9.6" height="9.7" fill="#153d64"/>
<rect x="301.7" y="152" width="9.6" height="9.4" fill="#156082"/>
<rect x="301.7" y="172.10" width="9.6" height="10.5" fill="#c1e4f5"/>
<rect x="301.7" y="182.50" width="9.6" height="10.5" fill="#83caeb"/>
<rect x="301.7" y="192.90" width="9.6" height="10.5" fill="#45b0e1"/>
<rect x="301.7" y="203.30" width="9.6" height="10.5" fill="#104862"/>
<rect x="301.7" y="213.70" width="9.6" height="9.7" fill="#0b3041"/>
<rect x="315.4" y="152" width="9.6" height="9.4" fill="#e97132"/>
<rect x="315.4" y="172.10" width="9.6" height="10.5" fill="#fbe3d6"/>
<rect x="315.4" y="182.50" width="9.6" height="10.5" fill="#f6c6ad"/>
<rect x="315.4" y="192.90" width="9.6" height="10.5" fill="#f2aa84"/>
<rect x="315.4" y="203.30" width="9.6" height="10.5" fill="#c04f15"/>
<rect x="315.4" y="213.70" width="9.6" height="9.7" fill="#80350e"/>
<rect x="329.1" y="152" width="9.6" height="9.4" fill="#196b24"/>
<rect x="329.1" y="172.10" width="9.6" height="10.5" fill="#c2f1c8"/>
<rect x="329.1" y="182.50" width="9.6" height="10.5" fill="#84e291"/>
<rect x="329.1" y="192.90" width="9.6" height="10.5" fill="#47d45a"/>
<rect x="329.1" y="203.30" width="9.6" height="10.5" fill="#13501b"/>
<rect x="329.1" y="213.70" width="9.6" height="9.7" fill="#0d3512"/>
<rect x="342.8" y="152" width="9.6" height="9.4" fill="#0f9ed5"/>
<rect x="342.8" y="172.10" width="9.6" height="10.5" fill="#caeefb"/>
<rect x="342.8" y="182.50" width="9.6" height="10.5" fill="#95dcf7"/>
<rect x="342.8" y="192.90" width="9.6" height="10.5" fill="#61cbf4"/>
<rect x="342.8" y="203.30" width="9.6" height="10.5" fill="#0b769f"/>
<rect x="342.8" y="213.70" width="9.6" height="9.7" fill="#074f6a"/>
<rect x="356.4" y="152" width="9.6" height="9.4" fill="#a02b93"/>
<rect x="356.4" y="172.10" width="9.6" height="10.5" fill="#f2cfee"/>
<rect x="356.4" y="182.50" width="9.6" height="10.5" fill="#e59edd"/>
<rect x="356.4" y="192.90" width="9.6" height="10.5" fill="#d86ecc"/>
<rect x="356.4" y="203.30" width="9.6" height="10.5" fill="#78206e"/>
<rect x="356.4" y="213.70" width="9.6" height="9.7" fill="#501549"/>
<rect x="370.1" y="152" width="9.6" height="9.4" fill="#4ea72e"/>
<rect x="370.1" y="172.10" width="9.6" height="10.5" fill="#d9f2d0"/>
<rect x="370.1" y="182.50" width="9.6" height="10.5" fill="#b4e5a2"/>
<rect x="370.1" y="192.90" width="9.6" height="10.5" fill="#8ed973"/>
<rect x="370.1" y="203.30" width="9.6" height="10.5" fill="#3b7d23"/>
<rect x="370.1" y="213.70" width="9.6" height="9.7" fill="#275317"/>
<rect x="328.5" y="192.5" width="10.799999999999999" height="11.2" fill="none" stroke="#e8a33a" stroke-width="1.1"/>
<rect x="247.0" y="259" width="9.6" height="9.8" fill="#c00000"/>
<rect x="260.7" y="259" width="9.6" height="9.8" fill="#ff0000"/>
<rect x="274.4" y="259" width="9.6" height="9.8" fill="#ffc000"/>
<rect x="288.0" y="259" width="9.6" height="9.8" fill="#ffff00"/>
<rect x="301.7" y="259" width="9.6" height="9.8" fill="#92d050"/>
<rect x="315.4" y="259" width="9.6" height="9.8" fill="#00b050"/>
<rect x="329.1" y="259" width="9.6" height="9.8" fill="#00b0f0"/>
<rect x="342.8" y="259" width="9.6" height="9.8" fill="#0070c0"/>
<rect x="356.4" y="259" width="9.6" height="9.8" fill="#002060"/>
<rect x="370.1" y="259" width="9.6" height="9.8" fill="#7030a0"/>
<rect x="247.7" y="304" width="9.6" height="9.6" fill="#2e8b1e"/>
<rect x="261.3" y="304" width="9.6" height="9.6" fill="#f01010"/>
<rect x="274.9" y="304" width="9.6" height="9.6" fill="#e0104c"/>
<rect x="288.5" y="304" width="9.6" height="9.6" fill="#2aa8a8"/>
<rect x="254.6" y="328.2" width="12.4" height="12.4" fill="none" stroke="#4a4a4a" stroke-width="1"/>
<text x="273.8" y="338.3" font-size="10.00" stroke="#f2f2f2" stroke-width="0.3" fill="#f2f2f2" textLength="44.6" lengthAdjust="spacingAndGlyphs">No Outline</text>
<line x1="273.8" y1="340" x2="280" y2="340" stroke="#f2f2f2" stroke-width=".8"/>
<path d="M260.6 351.4 c-3.8 0 -6.6 2.8 -6.6 6.4 c0 3.4 2.6 6.2 6 6.4 c1.4 0 1.6 -1 1.2 -1.8 c-.6 -1.4 .2 -2.4 1.6 -2.4 h2.2 c1.6 0 2.4 -1.2 2.4 -2.6 c0 -3.4 -3 -6 -6.8 -6 Z" fill="none" stroke="#e4e4e4" stroke-width="1"/>
<circle cx="257" cy="357" r=".9" fill="#e8e8e8"/>
<circle cx="258.6" cy="354.2" r=".9" fill="#e8e8e8"/>
<circle cx="262" cy="353.8" r=".9" fill="#e8e8e8"/>
<circle cx="264.4" cy="356.2" r=".9" fill="#e8e8e8"/>
<circle cx="257.6" cy="360.4" r=".9" fill="#e8e8e8"/>
<path d="M266.6 353.6 L262 360.6" stroke="#d05050" stroke-width="1.2"/>
<text x="270.2" y="358.9" font-size="10.00" stroke="#f2f2f2" stroke-width="0.3" fill="#f2f2f2" textLength="89.8" lengthAdjust="spacingAndGlyphs">More Outline Colors...</text>
<line x1="270.2" y1="360.6" x2="278" y2="360.6" stroke="#f2f2f2" stroke-width=".8"/>
<rect x="247" y="367.4" width="136" height="26.4" fill="#3a3a3a"/>
<rect x="254.4" y="374.4" width="12.4" height="2.2" fill="#3b8fe0"/>
<rect x="254.4" y="377.7" width="12.4" height="2.5" fill="#3b8fe0"/>
<rect x="254.4" y="381.1" width="12.4" height="2.8" fill="#3b8fe0"/>
<rect x="254.4" y="384.6" width="12.4" height="3.1" fill="#3b8fe0"/>
<text x="270.2" y="381.4" font-size="10.00" stroke="#f2f2f2" stroke-width="0.3" fill="#f2f2f2" textLength="29.6" lengthAdjust="spacingAndGlyphs">Weight</text>
<line x1="270.2" y1="383.2" x2="279.6" y2="383.2" stroke="#f2f2f2" stroke-width=".8"/>
<path d="M371.6 377.1 L375.6 380.8 L371.6 384.6" fill="none" stroke="#e6e6e6" stroke-width="1.3" stroke-linecap="round" stroke-linejoin="round"/>
<path d="M254.6 400 h12 M254.6 403.4 q1.5 -1.6 3 0 t3 0 t3 0 t3 0 M254.6 407.2 q1 -2.4 2 0 t2 0 t2 0 t2 0 t2 0 t2 0" fill="none" stroke="#d8d8d8" stroke-width="1"/>
<text x="270.2" y="405.0" font-size="10.00" stroke="#f2f2f2" stroke-width="0.3" fill="#f2f2f2" textLength="37.5" lengthAdjust="spacingAndGlyphs">Sketched</text>
<line x1="281.8" y1="406.6" x2="286" y2="406.6" stroke="#f2f2f2" stroke-width=".8"/>
<path d="M371.6 400.1 L375.6 403.8 L371.6 407.6" fill="none" stroke="#e6e6e6" stroke-width="1.3" stroke-linecap="round" stroke-linejoin="round"/>
<path d="M254.4 422 h12.6" stroke="#d8d8d8" stroke-width="1"/><path d="M254.4 425.4 h12.6" stroke="#d8d8d8" stroke-width="1" stroke-dasharray="1 1"/><path d="M254.4 428.6 h12.6" stroke="#d8d8d8" stroke-width="1" stroke-dasharray="2.4 1"/><path d="M254.4 431.8 h12.6" stroke="#d8d8d8" stroke-width="1" stroke-dasharray="3.6 1.2 1 1.2"/>
<text x="270.2" y="427.9" font-size="10.00" stroke="#f2f2f2" stroke-width="0.3" fill="#f2f2f2" textLength="29.6" lengthAdjust="spacingAndGlyphs">Dashes</text>
<line x1="281.4" y1="429.6" x2="286" y2="429.6" stroke="#f2f2f2" stroke-width=".8"/>
<path d="M371.6 422.9 L375.6 426.6 L371.6 430.4" fill="none" stroke="#e6e6e6" stroke-width="1.3" stroke-linecap="round" stroke-linejoin="round"/>
<path d="M254.4 447 H266.6 M264 444.6 L266.6 447 L264 449.4 M266.6 453.6 H254.4 M257 451.2 L254.4 453.6 L257 456 M264 451.2 L266.6 453.6 L264 456" fill="none" stroke="#6a6a6a" stroke-width="1"/>
<text x="270.2" y="450.7" font-size="10.00" stroke="#6e6e6e" stroke-width="0.3" fill="#6e6e6e" textLength="28.8" lengthAdjust="spacingAndGlyphs">Arrows</text>
<path d="M371.6 445.9 L375.6 449.6 L371.6 453.4" fill="none" stroke="#5a5a5a" stroke-width="1.3" stroke-linecap="round" stroke-linejoin="round"/>
</svg>
<svg class="L" width="715" height="496" viewBox="0 0 715 496" font-family="Liberation Sans, sans-serif" >
<rect x="386.5" y="394" width="119.5" height="21" rx="2" fill="#383838"/>
<text x="400.5" y="306.3" font-size="10.00" stroke="#ececec" stroke-width="0.3" fill="#ececec" textLength="18.7" lengthAdjust="spacingAndGlyphs">¼ pt</text>
<rect x="427.6" y="302.20" width="73" height="1" fill="#e6e6e6"/>
<text x="400.5" y="326.7" font-size="10.00" stroke="#ececec" stroke-width="0.3" fill="#ececec" textLength="18.7" lengthAdjust="spacingAndGlyphs">½ pt</text>
<rect x="427.6" y="322.53" width="73" height="1.1" fill="#eeeeee"/>
<text x="400.5" y="347.1" font-size="10.00" stroke="#ececec" stroke-width="0.3" fill="#ececec" textLength="18.7" lengthAdjust="spacingAndGlyphs">¾ pt</text>
<rect x="427.6" y="342.86" width="73" height="1.2" fill="#f6f6f6"/>
<text x="403.2" y="367.4" font-size="10.00" stroke="#ececec" stroke-width="0.3" fill="#ececec" textLength="16.0" lengthAdjust="spacingAndGlyphs">1 pt</text>
<rect x="427.6" y="363.14" width="73" height="1.4" fill="#fff"/>
<text x="395.2" y="387.8" font-size="10.00" stroke="#ececec" stroke-width="0.3" fill="#ececec" textLength="24.0" lengthAdjust="spacingAndGlyphs">1½ pt</text>
<rect x="427.6" y="383.22" width="73" height="2" fill="#fff"/>
<text x="395.2" y="408.2" font-size="10.00" stroke="#ececec" stroke-width="0.3" fill="#ececec" textLength="24.0" lengthAdjust="spacingAndGlyphs">2¼ pt</text>
<rect x="427.6" y="403.20" width="73" height="2.8" fill="#fff"/>
<text x="403.2" y="428.6" font-size="10.00" stroke="#ececec" stroke-width="0.3" fill="#ececec" textLength="16.0" lengthAdjust="spacingAndGlyphs">3 pt</text>
<rect x="427.6" y="423.08" width="73" height="3.8" fill="#fff"/>
<text x="395.2" y="449.0" font-size="10.00" stroke="#ececec" stroke-width="0.3" fill="#ececec" textLength="24.0" lengthAdjust="spacingAndGlyphs">4½ pt</text>
<rect x="427.6" y="442.66" width="73" height="5.4" fill="#fff"/>
<text x="403.2" y="469.3" font-size="10.00" stroke="#ececec" stroke-width="0.3" fill="#ececec" textLength="16.0" lengthAdjust="spacingAndGlyphs">6 pt</text>
<rect x="427.6" y="462.04" width="73" height="7.4" fill="#fff"/>
<line x1="383.8" y1="476" x2="519" y2="476" stroke="#454545" stroke-width="1"/>
<path d="M392.2 482.6 h12.6" stroke="#d8d8d8" stroke-width="1"/><path d="M392.2 485.8 h12.6" stroke="#d8d8d8" stroke-width="1" stroke-dasharray="1 1"/><path d="M392.2 489 h12.6" stroke="#d8d8d8" stroke-width="1" stroke-dasharray="2.4 1"/><path d="M392.2 492.4 h12.6" stroke="#d8d8d8" stroke-width="1.2"/><path d="M392.2 495.6 h12.6" stroke="#d8d8d8" stroke-width="1.4"/>
<text x="412.0" y="492.0" font-size="10.00" stroke="#f2f2f2" stroke-width="0.3" fill="#f2f2f2" textLength="50.9" lengthAdjust="spacingAndGlyphs">More Lines...</text>
<rect x="247" y="367.5" width="137" height="26.4" fill="none" stroke="#c6283a" stroke-width="2.4"/>
<rect x="397.6" y="413.4" width="116" height="21.2" fill="none" stroke="#c6283a" stroke-width="2.2"/>
</svg>
</body></html>
